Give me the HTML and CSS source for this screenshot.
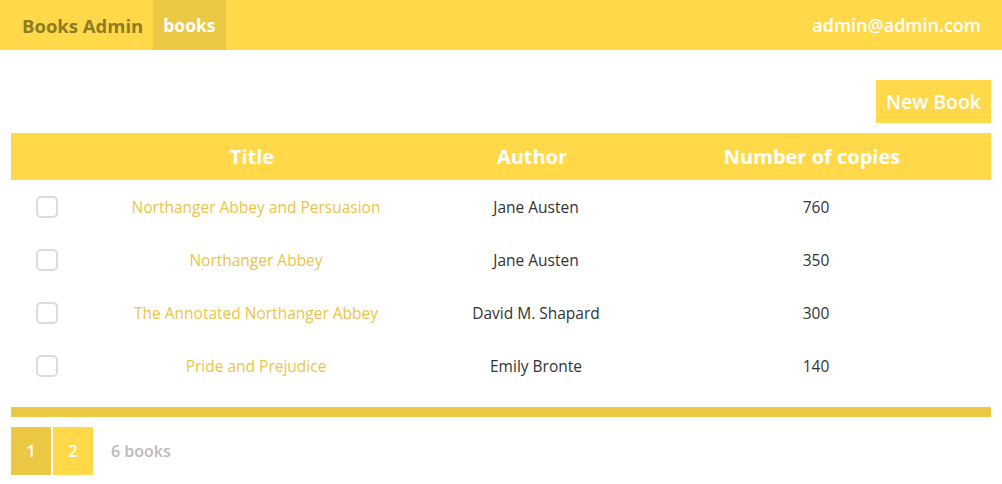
FILE: index.html
```html
<!DOCTYPE html>
<html>
<head>
<meta charset="utf-8">
<link rel="stylesheet" href="styles.css">
</head>
<body>
<nav class="navbar">
  <div class="nav-left">
    <span class="brand">Books Admin</span>
    <span class="tab">books</span>
  </div>
  <span class="user">admin@admin.com</span>
</nav>
<main class="content">
  <div class="toolbar">
    <button class="btn-new">New Book</button>
  </div>
  <table class="grid">
    <colgroup>
      <col class="c-check"><col class="c-title"><col class="c-author"><col class="c-num">
    </colgroup>
    <thead>
      <tr><th></th><th>Title</th><th>Author</th><th>Number of copies</th></tr>
    </thead>
    <tbody>
      <tr><td><span class="check"></span></td><td class="link">Northanger Abbey and Persuasion</td><td>Jane Austen</td><td>760</td></tr>
      <tr><td><span class="check"></span></td><td class="link">Northanger Abbey</td><td>Jane Austen</td><td>350</td></tr>
      <tr><td><span class="check"></span></td><td class="link">The Annotated Northanger Abbey</td><td>David M. Shapard</td><td>300</td></tr>
      <tr><td><span class="check"></span></td><td class="link">Pride and Prejudice</td><td>Emily Bronte</td><td>140</td></tr>
    </tbody>
  </table>
  <div class="bar"></div>
  <div class="pager">
    <span class="page active">1</span>
    <span class="page">2</span>
    <span class="count">6 books</span>
  </div>
</main>
</body>
</html>
```
FILE: styles.css
```css
* { box-sizing: border-box; }
body {
  margin: 0;
  font-family: "Open Sans", "Noto Sans", sans-serif;
  background: #fff;
  color: #333;
}
.navbar {
  height: 50px;
  background: #ffd94a;
  display: flex;
  align-items: stretch;
  justify-content: space-between;
}
.nav-left { display: flex; align-items: stretch; }
.brand {
  display: flex; align-items: center;
  padding: 0 10px 0 22px;
  font-size: 18.5px; font-weight: 700;
  color: #8c7d22;
}
.tab {
  display: flex; align-items: center;
  padding: 0 10px;
  background: #ebc944;
  color: #fff; font-size: 17.5px; font-weight: 700;
}
.user {
  display: flex; align-items: center;
  padding-right: 21px;
  color: #fff; font-size: 18px; font-weight: 600;
}
.content { padding: 30px 11px 0 11px; }
.toolbar { display: flex; justify-content: flex-end; height: 43px; margin-bottom: 10px; }
.btn-new {
  border: none; background: #ffd94a; color: #fff;
  font-family: inherit; font-size: 19.5px; font-weight: 600;
  padding: 0 10px; height: 43px;
}
.grid { width: 100%; border-collapse: collapse; table-layout: fixed; }
.c-check { width: 70px; }
.c-title { width: 350px; }
.c-author { width: 210px; }
.c-num { width: 350px; }
.grid th {
  background: #ffd94a; color: #fff;
  height: 47px; font-size: 20px; font-weight: 700;
  padding: 0 8px 0 0;
}
.grid td {
  height: 53px; text-align: center; font-size: 15.5px; color: #333;
  padding: 0;
}
.grid td.link { color: #ecc448; }
.check {
  display: inline-block; width: 22px; height: 22px;
  border: 2px solid #dcdcdc; border-radius: 5px;
  vertical-align: middle;
}
.grid td:first-child { text-align: left; padding-left: 25px; }
.bar { height: 10px; background: #ebc944; margin-top: 15px; }
.pager { display: flex; align-items: center; margin-top: 10px; gap: 2px; }
.page {
  width: 40px; height: 48px; display: flex; align-items: center; justify-content: center;
  background: #ffd94a; color: #fff; font-size: 16px; font-weight: 600;
}
.page.active { background: #ebc944; }
.count { margin-left: 16px; color: #bbb; font-size: 16px; font-weight: 600; }
```
